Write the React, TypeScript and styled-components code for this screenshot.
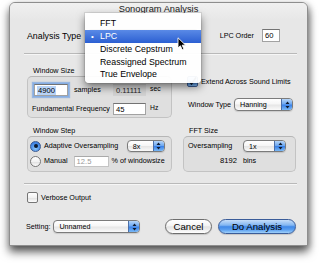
import React from "react";
import styled, { createGlobalStyle, css } from "styled-components";

const FONT = `"Lucida Grande", "Liberation Sans", Arial, sans-serif`;

const Global = createGlobalStyle`
  html, body { margin: 0; padding: 0; background: #ffffff; }
  body { font-family: ${FONT}; color: #000; }
  * { box-sizing: border-box; }
`;

const Page = styled.div`
  position: relative;
  width: 320px;
  height: 264px;
  padding: 2px 12px 0 9px;
  overflow: hidden;
`;

const Window = styled.div`
  width: 299px;
  height: 244px;
  display: flex;
  flex-direction: column;
  background: #e7e7e7;
  border: 1px solid #8e8e8e;
  border-radius: 6px 6px 0 0;
  box-shadow: 0 6px 10px rgba(0, 0, 0, 0.6), 2px 2px 6px rgba(0, 0, 0, 0.25);
`;

const TitleBar = styled.div`
  height: 17px;
  line-height: 13px;
  text-align: center;
  font-size: 9.3px;
  color: #1a1a1a;
  border-radius: 5px 5px 0 0;
  background: linear-gradient(#f0f0f0, #e7e7e7);
`;

const Body = styled.div`
  flex: 1;
  display: flex;
  flex-direction: column;
  padding: 0 11px 0 17px;
`;

const Text = styled.span<{ $size?: "small" | "regular"; $muted?: boolean }>`
  font-size: ${(p) => (p.$size === "regular" ? "8.8px" : "7.2px")};
  line-height: 10px;
  white-space: nowrap;
  color: ${(p) => (p.$muted ? "#8a8a8a" : "#000")};
`;

const TopRow = styled.div`
  display: flex;
  align-items: center;
  height: 13px;
  margin-top: 9px;
  padding-right: 16px;
`;

const LpcLabel = styled(Text)`
  margin-left: auto;
  margin-right: 8px;
`;

const Separator = styled.div<{ $gap: number }>`
  height: 2px;
  margin: ${(p) => p.$gap}px -1px 0 -3px;
  border-top: 1px solid #b9b9b9;
  border-bottom: 1px solid #f6f6f6;
`;

const Columns = styled.div`
  display: grid;
  grid-template-columns: 145px 113px;
  column-gap: 11px;
  row-gap: 8px;
  margin-top: 11px;
`;

const Section = styled.div`
  display: flex;
  flex-direction: column;
`;

const SectionTitle = styled(Text)`
  line-height: 9px;
  padding-left: 6px;
  margin-bottom: 1px;
`;

const GroupBox = styled.div<{ $h: number; $pad: string }>`
  height: ${(p) => p.$h}px;
  padding: ${(p) => p.$pad};
  border: 1px solid #c3c3c3;
  border-top-color: #b6b6b6;
  border-radius: 5px;
  background: #dfdfdf;
`;

const SizeGrid = styled.div`
  display: grid;
  grid-template-columns: 81px 33px auto;
  grid-template-rows: 12px 12px;
  row-gap: 7px;
  align-items: center;
`;

const FieldGroup = styled.div`
  display: flex;
  align-items: center;
  gap: 6px;
  padding-left: 2px;
`;

const Unit = styled(Text)`
  align-self: start;
  padding-left: 4px;
  line-height: 9px;
  font-size: 6.8px;
`;

const TextField = styled.div<{ $w: number; $h?: number; $focused?: boolean; $disabled?: boolean }>`
  width: ${(p) => p.$w}px;
  height: ${(p) => p.$h ?? 12}px;
  display: flex;
  align-items: center;
  padding-left: 2px;
  font-size: 7.6px;
  background: #fff;
  border: 1px solid #a2a2a2;
  border-top-color: #737373;
  color: ${(p) => (p.$disabled ? "#9a9a9a" : "#000")};
  ${(p) =>
    p.$disabled &&
    css`
      border-color: #c4c4c4;
      border-top-color: #a9a9a9;
    `}
  ${(p) =>
    p.$focused &&
    css`
      box-shadow: 0 0 0 1px #86aee3, 0 0 1px 2px rgba(95, 150, 225, 0.55);
    `}
`;

const Selection = styled.span`
  background: #b8d3f6;
  padding: 0 1px;
  line-height: 9px;
`;

const ReadOnlyField = styled.div`
  width: 33px;
  height: 12px;
  display: flex;
  align-items: center;
  padding-left: 3px;
  font-size: 7.6px;
  color: #1e1e1e;
  background: #d3d3d3;
  border-top: 1px solid #c6c6c6;
`;

const RightTop = styled.div`
  display: flex;
  flex-direction: column;
  padding-top: 10px;
  gap: 11px;
`;

const CheckRow = styled.div<{ $indent: number }>`
  display: flex;
  align-items: center;
  gap: 3px;
  height: 11px;
  padding-left: ${(p) => p.$indent}px;
`;

const PopupRow = styled.div`
  display: flex;
  align-items: center;
  gap: 3px;
  height: 13px;
  padding-left: 5px;
`;

const StepRows = styled.div`
  display: grid;
  grid-template-rows: 12px 12px;
  row-gap: 3px;
`;

const StepRow = styled.div`
  display: flex;
  align-items: center;
  gap: 3px;
  padding-right: 10px;
`;

const PushRight = styled.div`
  margin-left: auto;
`;

const FftGrid = styled.div`
  display: grid;
  grid-template-columns: 55px 43px;
  grid-template-rows: 12px 12px;
  row-gap: 3px;
  align-items: center;
`;

const Count = styled(Text)`
  justify-self: end;
  padding-right: 6px;
  font-size: 7.6px;
`;

const BottomRow = styled.div`
  display: flex;
  align-items: center;
  height: 15px;
  margin-top: 16px;
  margin-left: -1px;
  gap: 3px;
`;

const ButtonGroup = styled.div`
  margin-left: auto;
  display: flex;
  gap: 6px;
`;

const Button = styled.div<{ $w: number; $default?: boolean }>`
  width: ${(p) => p.$w}px;
  height: 15px;
  border-radius: 8px;
  display: flex;
  align-items: center;
  justify-content: center;
  font-size: 9.6px;
  color: #000;
  border: 1px solid #6e6e6e;
  background: linear-gradient(#ffffff 0%, #f4f4f4 45%, #e3e3e3 52%, #f1f1f1 80%, #ffffff 100%);
  box-shadow: 0 1px 1px rgba(0, 0, 0, 0.15);
  ${(p) =>
    p.$default &&
    css`
      border-color: #3a5c99;
      background: linear-gradient(#c6def9 0%, #82b6f2 40%, #4189e8 52%, #5a9ff0 75%, #9fd0fa 100%);
    `}
`;

/* ---- Aqua popup button ---- */
const PopupBox = styled.div<{ $w: number; $h: number }>`
  width: ${(p) => p.$w}px;
  height: ${(p) => p.$h}px;
  display: flex;
  border: 1px solid #7b7b7b;
  border-radius: 4px;
  overflow: hidden;
  background: linear-gradient(#ffffff 0%, #f6f6f6 45%, #e6e6e6 55%, #fafafa 100%);
  box-shadow: 0 1px 1px rgba(0, 0, 0, 0.12);
`;

const PopupLabel = styled.span<{ $size?: "small" | "regular" }>`
  flex: 1;
  display: flex;
  align-items: center;
  padding-left: 5px;
  font-size: ${(p) => (p.$size === "regular" ? "8.8px" : "7.2px")};
  white-space: nowrap;
`;

const PopupArrows = styled.span`
  width: 11px;
  display: flex;
  align-items: center;
  justify-content: center;
  border-left: 1px solid #4c6fa8;
  background: linear-gradient(#b6d5f8 0%, #6fa9f0 45%, #3b82e8 55%, #7ab9f6 100%);
`;

function Popup({ w, h = 12, value, size }: { w: number; h?: number; value?: string; size?: "small" | "regular" }) {
  return (
    <PopupBox $w={w} $h={h}>
      <PopupLabel $size={size}>{value}</PopupLabel>
      <PopupArrows>
        <svg width="5" height="8" viewBox="0 0 5 8">
          <path d="M2.5 0.5 L4.5 3 L0.5 3 Z M2.5 7.5 L4.5 5 L0.5 5 Z" fill="#101a2c" />
        </svg>
      </PopupArrows>
    </PopupBox>
  );
}

/* ---- checkbox / radio ---- */
const CheckBox = styled.span<{ $checked?: boolean }>`
  width: 11px;
  height: 11px;
  flex: none;
  display: flex;
  align-items: center;
  justify-content: center;
  border-radius: 2px;
  border: 1px solid #767676;
  background: linear-gradient(#ffffff 0%, #f2f2f2 50%, #e2e2e2 55%, #fdfdfd 100%);
  ${(p) =>
    p.$checked &&
    css`
      border-color: #3c5d95;
      background: linear-gradient(#b7d6f8 0%, #6aa6ef 45%, #3b80e4 55%, #86c0f6 100%);
    `}
`;

function Checkbox({ checked }: { checked?: boolean }) {
  return (
    <CheckBox $checked={checked}>
      {checked && (
        <svg width="9" height="9" viewBox="0 0 9 9">
          <path d="M1.5 4.5 L3.5 7 L8 0.5" stroke="#0d1a30" strokeWidth="1.5" fill="none" />
        </svg>
      )}
    </CheckBox>
  );
}

const RadioDot = styled.span<{ $on?: boolean }>`
  width: 11px;
  height: 11px;
  flex: none;
  border-radius: 50%;
  display: flex;
  align-items: center;
  justify-content: center;
  border: 1px solid #777;
  background: linear-gradient(#ffffff 0%, #f1f1f1 50%, #e0e0e0 55%, #fcfcfc 100%);
  ${(p) =>
    p.$on &&
    css`
      border-color: #3a5a92;
      background: radial-gradient(circle at 50% 70%, #8cc6f8 0%, #4b8fe9 55%, #2f6fd6 100%);
      &::after {
        content: "";
        width: 4px;
        height: 4px;
        border-radius: 50%;
        background: #0e1a2e;
      }
    `}
`;

/* ---- menu ---- */
const Menu = styled.div`
  position: absolute;
  left: 85px;
  top: 13px;
  width: 116px;
  padding: 4px 0 2px;
  background: rgba(255, 255, 255, 0.95);
  border-radius: 0 0 4px 4px;
  box-shadow: 0 4px 9px rgba(0, 0, 0, 0.5), 0 0 0 1px rgba(0, 0, 0, 0.08);
`;

const MenuItem = styled.div<{ $active?: boolean }>`
  height: 12.75px;
  display: flex;
  align-items: center;
  padding-left: 6px;
  font-size: 8.8px;
  white-space: nowrap;
  color: ${(p) => (p.$active ? "#fff" : "#000")};
  background: ${(p) => (p.$active ? "linear-gradient(#5a8ae6, #2b5fd2)" : "transparent")};
`;

const Mark = styled.span`
  width: 9px;
  font-size: 8px;
`;

const Cursor = styled.svg`
  position: absolute;
  left: 177px;
  top: 37px;
`;

const PushGap = styled.div`
  margin-left: 6px;
`;

const ManualField = styled.div`
  margin-left: 3px;
`;

const VerboseRow = styled.div`
  margin-top: 7px;
`;

const MENU = ["FFT", "LPC", "Discrete Cepstrum", "Reassigned Spectrum", "True Envelope"];

export default function App() {
  return (
    <>
      <Global />
      <Page>
        <Window>
          <TitleBar>Sonogram Analysis</TitleBar>
          <Body>
            <TopRow>
              <Text $size="regular">Analysis Type</Text>
              <PushGap>
                {/* the open menu covers this popup entirely */}
                <Popup w={112} h={13} size="regular" />
              </PushGap>
              <LpcLabel>LPC Order</LpcLabel>
              <TextField $w={18} $h={13}>60</TextField>
            </TopRow>
            <Separator $gap={11} />
            <Columns>
              <Section>
                <SectionTitle>Window Size</SectionTitle>
                <GroupBox $h={42} $pad="7px 0 0 4px">
                  <SizeGrid>
                    <FieldGroup>
                      <TextField $w={34} $focused>
                        <Selection>4900</Selection>
                      </TextField>
                      <Text>samples</Text>
                    </FieldGroup>
                    <ReadOnlyField>0.11111</ReadOnlyField>
                    <Unit>sec</Unit>
                    <Text>Fundamental Frequency</Text>
                    <TextField $w={33}>45</TextField>
                    <Unit>Hz</Unit>
                  </SizeGrid>
                </GroupBox>
              </Section>
              <RightTop>
                <CheckRow $indent={4}>
                  <Checkbox checked />
                  <Text>Extend Across Sound Limits</Text>
                </CheckRow>
                <PopupRow>
                  <Text>Window Type</Text>
                  <Popup w={59} h={13} value="Hanning" />
                </PopupRow>
              </RightTop>
              <Section>
                <SectionTitle>Window Step</SectionTitle>
                <GroupBox $h={36} $pad="3px 0 0 2px">
                  <StepRows>
                    <StepRow>
                      <RadioDot $on />
                      <Text>Adaptive Oversampling</Text>
                      <PushRight>
                        <Popup w={38} value="8x" />
                      </PushRight>
                    </StepRow>
                    <StepRow>
                      <RadioDot />
                      <Text>Manual</Text>
                      <ManualField>
                        <TextField $w={35} $h={11} $disabled>
                          12.5
                        </TextField>
                      </ManualField>
                      <Text>% of windowsize</Text>
                    </StepRow>
                  </StepRows>
                </GroupBox>
              </Section>
              <Section>
                <SectionTitle>FFT Size</SectionTitle>
                <GroupBox $h={36} $pad="3px 0 0 4px">
                  <FftGrid>
                    <Text>Oversampling</Text>
                    <Popup w={43} value="1x" />
                    <Count>8192</Count>
                    <Text>bins</Text>
                  </FftGrid>
                </GroupBox>
              </Section>
            </Columns>
            <Separator $gap={11} />
            <VerboseRow>
              <CheckRow $indent={0}>
                <Checkbox />
                <Text>Verbose Output</Text>
              </CheckRow>
            </VerboseRow>
            <BottomRow>
              <Text>Setting:</Text>
              <Popup w={87} h={13} value="Unnamed" />
              <ButtonGroup>
                <Button $w={47}>Cancel</Button>
                <Button $w={78} $default>
                  Do Analysis
                </Button>
              </ButtonGroup>
            </BottomRow>
          </Body>
        </Window>
        <Menu>
          {MENU.map((item) => (
            <MenuItem key={item} $active={item === "LPC"}>
              <Mark>{item === "LPC" ? "•" : ""}</Mark>
              {item}
            </MenuItem>
          ))}
        </Menu>
        <Cursor width="10" height="14" viewBox="0 0 10 14">
          <path d="M1 0.8 L1 11 L3.4 8.8 L5.2 12.8 L6.9 12 L5.2 8.2 L8.6 8.2 Z" fill="#000" stroke="#fff" strokeWidth="0.9" />
        </Cursor>
      </Page>
    </>
  );
}
